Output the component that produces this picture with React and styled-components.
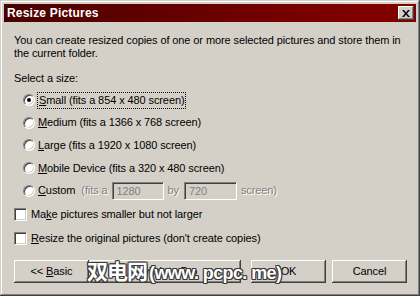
import React from "react";
import styled, { createGlobalStyle } from "styled-components";

const Global = createGlobalStyle`
  html, body { margin: 0; padding: 0; background: #d4d0c8; }
  body { font-family: "Liberation Sans", Arial, sans-serif; }
`;

const Window = styled.div`
  position: relative;
  box-sizing: border-box;
  width: 420px;
  height: 296px;
  padding: 4px;
  background: #d4d0c8;
  box-shadow: inset -1px -1px #404040, inset 1px 1px #d4d0c8,
    inset -2px -2px #808080, inset 2px 2px #ffffff;
  display: flex;
  flex-direction: column;
  font-size: 11px;
  letter-spacing: -0.1px;
  color: #000;
`;

const TitleBar = styled.div`
  height: 18px;
  background: linear-gradient(to right, #4a0000, #800000 85%);
  display: flex;
  align-items: center;
  justify-content: space-between;
  padding: 0 2px 0 3px;
`;

const Title = styled.span`
  color: #fff;
  font-weight: bold;
  font-size: 12px;
  letter-spacing: 0.2px;
`;

const CloseBtn = styled.div`
  width: 16px;
  height: 14px;
  box-sizing: border-box;
  background: #d4d0c8;
  box-shadow: inset -1px -1px #404040, inset 1px 1px #ffffff,
    inset -2px -2px #808080, inset 2px 2px #d4d0c8;
  display: flex;
  align-items: center;
  justify-content: center;
`;

const Content = styled.div`
  padding: 12px 0 0 10px;
  display: flex;
  flex-direction: column;
`;

const Para = styled.p`
  margin: 0;
  line-height: 13px;
`;

const Label = styled.div`
  margin-top: 12px;
  line-height: 13px;
`;

const Options = styled.div`
  margin-top: 4px;
  padding-left: 9px;
  display: flex;
  flex-direction: column;
`;

const OptRow = styled.div`
  height: 22.6px;
  display: flex;
  align-items: center;
  gap: 3px;
`;

const Radio = styled.span`
  width: 12px;
  height: 12px;
  box-sizing: border-box;
  border-radius: 50%;
  border: 1px solid;
  border-color: #808080 #ffffff #ffffff #808080;
  box-shadow: inset 1px 1px #404040, inset -1px -1px #d4d0c8;
  background: #fff;
  display: flex;
  align-items: center;
  justify-content: center;
  flex: none;
  &::after {
    content: "";
    width: 4px;
    height: 4px;
    border-radius: 50%;
    background: #000;
    display: ${(p) => (p.$checked ? "block" : "none")};
  }
`;

const Focus = styled.span`
  outline: 1px dotted #000;
  padding: 1px 1px;
  line-height: 13px;
`;

const Text = styled.span`
  line-height: 13px;
  white-space: nowrap;
  padding-left: ${(p) => p.$pl || 0}px;
  color: ${(p) => (p.$disabled ? "#808080" : "#000")};
  text-shadow: ${(p) => (p.$disabled ? "1px 1px #ffffff" : "none")};
`;

const Field = styled.span`
  box-sizing: border-box;
  height: 18px;
  width: ${(p) => p.$w}px;
  margin: 0 ${(p) => p.$mr || 1}px 0 ${(p) => p.$ml || 1}px;
  border: 1px solid;
  border-color: #808080 #ffffff #ffffff #808080;
  box-shadow: inset 1px 1px #404040, inset -1px -1px #d4d0c8;
  padding: 0 4px;
  display: inline-flex;
  align-items: center;
  color: #808080;
`;

const Checks = styled.div`
  margin-top: 1px;
  display: flex;
  flex-direction: column;
`;

const CheckRow = styled.div`
  height: 24px;
  display: flex;
  align-items: center;
  gap: 4px;
`;

const Box = styled.span`
  width: 13px;
  height: 13px;
  box-sizing: border-box;
  border: 1px solid;
  border-color: #808080 #ffffff #ffffff #808080;
  box-shadow: inset 1px 1px #404040, inset -1px -1px #d4d0c8;
  background: #fff;
  flex: none;
`;

const Buttons = styled.div`
  margin-top: 9px;
  display: flex;
  align-items: center;
`;

const Button = styled.button`
  box-sizing: border-box;
  width: ${(p) => p.$w}px;
  height: 23px;
  margin-left: ${(p) => p.$ml || 0}px;
  border: none;
  background: #d4d0c8;
  box-shadow: inset -1px -1px #404040, inset 1px 1px #ffffff,
    inset -2px -2px #808080, inset 2px 2px #d4d0c8;
  font-family: "Liberation Sans", Arial, sans-serif;
  font-size: 11px;
  letter-spacing: -0.1px;
  color: #000;
  padding: 0;
`;

const Watermark = styled.div`
  position: absolute;
  left: 87px;
  top: 256px;
  display: flex;
  align-items: baseline;
  gap: 2px;
  color: #fff;
  white-space: nowrap;
  font-weight: bold;
  line-height: 28px;
  text-shadow: -1px -1px #3a3a3a, 1px -1px #3a3a3a, -1px 1px #3a3a3a,
    1px 1px #3a3a3a, 0 1px #3a3a3a, 0 -1px #3a3a3a, 1px 0 #3a3a3a,
    -1px 0 #3a3a3a;
`;

const WmCjk = styled.span`
  font-family: "Noto Sans CJK SC", sans-serif;
  font-size: 21px;
  letter-spacing: -1px;
`;

const WmLatin = styled.span`
  font-family: "Liberation Sans", Arial, sans-serif;
  font-size: 18px;
  letter-spacing: -0.6px;
`;

const U = styled.u`
  text-decoration: underline;
  text-underline-offset: 1px;
`;

export default function App() {
  return (
    <>
      <Global />
      <Window>
        <TitleBar>
          <Title>Resize Pictures</Title>
          <CloseBtn>
            <svg width="8" height="7" viewBox="0 0 8 7">
              <path d="M0 0h2l2 2.5L6 0h2L5 3.5 8 7H6L4 4.5 2 7H0l3-3.5z" fill="#000" />
            </svg>
          </CloseBtn>
        </TitleBar>
        <Content>
          <Para>
            You can create resized copies of one or more selected pictures and store them in
            <br />
            the current folder.
          </Para>
          <Label>Select a size:</Label>
          <Options>
            <OptRow>
              <Radio $checked />
              <Focus>
                <U>S</U>mall (fits a 854 x 480 screen)
              </Focus>
            </OptRow>
            <OptRow>
              <Radio />
              <Text>
                <U>M</U>edium (fits a 1366 x 768 screen)
              </Text>
            </OptRow>
            <OptRow>
              <Radio />
              <Text>
                <U>L</U>arge (fits a 1920 x 1080 screen)
              </Text>
            </OptRow>
            <OptRow>
              <Radio />
              <Text>
                <U>M</U>obile Device (fits a 320 x 480 screen)
              </Text>
            </OptRow>
            <OptRow>
              <Radio />
              <Text>
                <U>C</U>ustom
              </Text>
              <Text $disabled $pl={3}>(fits a</Text>
              <Field $w={52}>1280</Field>
              <Text $disabled>by</Text>
              <Field $w={53} $ml={2} $mr={0}>720</Field>
              <Text $disabled>screen)</Text>
            </OptRow>
          </Options>
          <Checks>
            <CheckRow>
              <Box />
              <Text>
                Ma<U>k</U>e pictures smaller but not larger
              </Text>
            </CheckRow>
            <CheckRow>
              <Box />
              <Text>
                <U>R</U>esize the original pictures (don't create copies)
              </Text>
            </CheckRow>
          </Checks>
          <Buttons>
            <Button $w={75}>
              &lt;&lt; <U>B</U>asic
            </Button>
            <Button $w={151} $ml={1}>
              <U>S</U>witch to Pro
            </Button>
            <Button $w={75} $ml={10}>
              OK
            </Button>
            <Button $w={75} $ml={6}>
              Cancel
            </Button>
          </Buttons>
        </Content>
        <Watermark>
          <WmCjk>双电网</WmCjk>
          <WmLatin>(www. pcpc. me)</WmLatin>
        </Watermark>
      </Window>
    </>
  );
}
